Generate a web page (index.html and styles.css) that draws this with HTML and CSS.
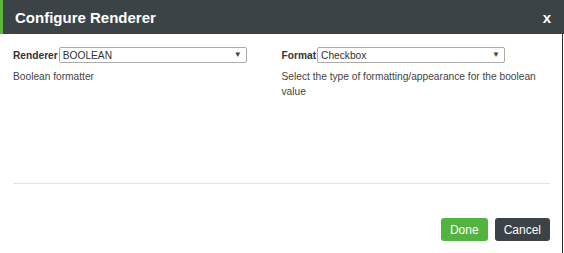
FILE: index.html
```html
<!DOCTYPE html>
<html lang="en">

<head>
	<meta charset="UTF-8">
	<meta name="viewport" content="width=device-width, initial-scale=1.0">
	<title>Configure Renderer</title>

	<link rel="stylesheet" href="styles.css">
</head>

<body>
	<div class="modal">
		<div class="modal-header">
			<h2 class="modal-title">Configure Renderer</h2>
			<span class="btn-close">x</span>
		</div>
		<div class="modal-main">
			<div class="modal-body">
				<div class="col">
					<div class="field">
						<label for="renderer">Renderer</label>
						<div class="select-wrap">
							<select name="renderer" id="renderer" class="select">
								<option>BOOLEAN</option>
							</select>
							<span class="caret">&#9660;</span>
						</div>
					</div>
					<p class="help">Boolean formatter</p>
				</div>
				<div class="col">
					<div class="field">
						<label for="format">Format</label>
						<div class="select-wrap">
							<select name="format" id="format" class="select">
								<option>Checkbox</option>
							</select>
							<span class="caret">&#9660;</span>
						</div>
					</div>
					<p class="help">Select the type of formatting/appearance for the boolean value</p>
				</div>
			</div>
			<div class="modal-footer">
				<button class="btn btn-done">Done</button>
				<button class="btn btn-cancel">Cancel</button>
			</div>
		</div>
	</div>
</body>

</html>
```

FILE: styles.css
```css
body {
	margin: 0;
	font-family: "Liberation Sans", Arial, sans-serif;
	background-color: #fff;
}

.modal {
	width: 564px;
	height: 253px;
	display: flex;
	flex-direction: column;
}

.modal-header {
	height: 34px;
	box-sizing: border-box;
	background-color: #3c4346;
	border-left: 3px solid #5cb83a;
	display: flex;
	align-items: center;
	justify-content: space-between;
	padding: 0 13px 0 12px;
	color: #fff;
}

.modal-title {
	margin: 0;
	font-size: 15px;
	font-weight: bold;
}

.btn-close {
	font-size: 15px;
	font-weight: bold;
	margin-top: 1px;
}

.modal-main {
	width: 562px;
	flex: 1;
	border-right: 1px solid #2b2b2b;
	box-sizing: content-box;
}

.modal-body {
	height: 149px;
	box-sizing: border-box;
	padding: 13px 12px 0 13px;
	display: grid;
	grid-template-columns: 1fr 1fr;
	align-items: start;
	font-size: 10.2px;
	color: #333;
}

.field {
	display: flex;
	align-items: center;
}

.field label {
	font-weight: bold;
	margin-right: 1px;
}

.select-wrap {
	position: relative;
	width: 188px;
}

.select {
	appearance: none;
	-webkit-appearance: none;
	display: block;
	width: 100%;
	height: 16px;
	box-sizing: border-box;
	margin: 0;
	padding: 0 12px 0 3px;
	border: 1px solid #aaa;
	border-radius: 2px;
	background-color: #fff;
	font-family: "Liberation Sans", Arial, sans-serif;
	font-size: 10.2px;
	color: #333;
}

/* 화살표는 select 위에 겹쳐서 그림 */
.caret {
	position: absolute;
	right: 5px;
	top: 3px;
	font-size: 8px;
	color: #444;
	pointer-events: none;
}

.help {
	margin: 6px 0 0;
	line-height: 15px;
	color: #444;
}

.modal-footer {
	margin: 0 12px 0 13px;
	border-top: 1px solid #e2e2e2;
	padding-top: 34px;
	display: flex;
	justify-content: flex-end;
	gap: 7px;
}

.btn {
	height: 23px;
	padding: 0 9px;
	border: none;
	border-radius: 3px;
	color: #fff;
	font-family: "Liberation Sans", Arial, sans-serif;
	font-size: 12px;
	cursor: pointer;
}

.btn-done {
	background-color: #52b33e;
}

.btn-cancel {
	background-color: #3c4346;
}
```
